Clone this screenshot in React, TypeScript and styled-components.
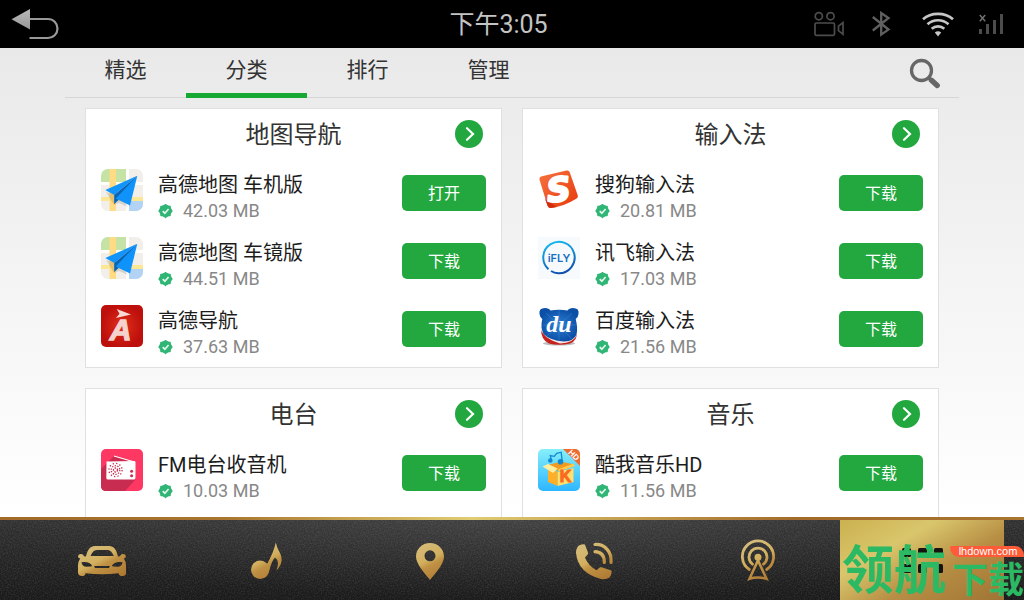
import { ReactNode, useState } from "react";
import styled, { createGlobalStyle } from "styled-components";

const GlobalStyle = createGlobalStyle`
  * {
    box-sizing: border-box;
  }
  body {
    margin: 0;
    font-family: Roboto, "Noto Sans CJK SC", sans-serif;
    overflow: hidden;
  }
  button {
    font-family: inherit;
    border: 0;
    padding: 0;
    background: none;
    cursor: pointer;
  }
  svg {
    display: block;
  }
`;

const Screen = styled.div`
  position: relative;
  height: 100vh;
  display: flex;
  flex-direction: column;
  overflow: hidden;
`;

const StatusBar = styled.header`
  flex: none;
  height: 48px;
  display: grid;
  grid-template-columns: 1fr auto 1fr;
  align-items: center;
  padding: 0 21px 0 10px;
  background-color: #000;
`;

const BackButton = styled.button`
  justify-self: start;
`;

const Clock = styled.time`
  margin-right: 16px;
  padding-top: 2px;
  color: #c4c4c4;
  font-size: 25px;
  line-height: 46px;
`;

const StatusIcons = styled.div`
  justify-self: end;
  display: flex;
  gap: 24px;
`;

const Store = styled.main`
  flex: 1;
  min-height: 0;
  padding: 0 65px;
  overflow: hidden;
  background: linear-gradient(#e9e9e9, #ffffff);
`;

const Nav = styled.nav`
  height: 50px;
  display: flex;
  align-items: stretch;
  box-shadow: inset 0 -1px 0 #d6d6d6;
`;

const Tab = styled.button<{ $active: boolean }>`
  width: 121px;
  padding-bottom: 2px;
  color: #333;
  font-size: 21px;
  line-height: 32px;
  border-bottom: 5px solid ${(props) => (props.$active ? "#16a832" : "transparent")};
`;

const SearchButton = styled.button`
  margin-left: auto;
  margin-right: 16px;
`;

const Cards = styled.div`
  display: grid;
  grid-template-columns: 1fr 1fr;
  gap: 20px;
  padding: 10px 20px;
`;

const Card = styled.section`
  min-height: 260px;
  padding-bottom: 4px;
  background-color: #fff;
  border: 1px solid #e0e0e0;
`;

const CardHeader = styled.div`
  height: 50px;
  display: grid;
  grid-template-columns: 28px 1fr 28px;
  align-items: center;
  padding: 0 18px;
`;

const CardTitle = styled.h2`
  grid-column: 2;
  margin: 0;
  padding-top: 2px;
  text-align: center;
  color: #333;
  font-size: 24px;
  font-weight: 400;
  line-height: 36px;
`;

const MoreButton = styled.button`
  width: 28px;
  height: 28px;
  border-radius: 50%;
  background-color: #22a83f;
`;

const AppList = styled.ul`
  margin: 0;
  padding: 0;
  list-style: none;
`;

const AppRow = styled.li`
  display: flex;
  align-items: flex-start;
  gap: 15px;
  padding: 10px 15px 4px;
`;

const AppInfo = styled.div`
  flex: 1;
  min-width: 0;
`;

const AppName = styled.div`
  padding-top: 2px;
  color: #1c1c1c;
  font-size: 20px;
  line-height: 28px;
`;

const AppSize = styled.div`
  display: flex;
  align-items: center;
  gap: 10px;
  color: #888;
  font-size: 18px;
  line-height: 24px;
`;

const ActionButton = styled.button`
  width: 84px;
  height: 36px;
  margin-top: 6px;
  padding-top: 2px;
  border-radius: 5px;
  background-color: #22a83f;
  color: #fff;
  font-size: 16px;
  line-height: 24px;
`;

const Dock = styled.footer`
  flex: none;
  border-top: 3px solid;
  border-image: linear-gradient(90deg, #a36a2a 0%, #a9752f 22%, #e0cc72 46%, #a36a2a 78%, #a9752f) 1;
`;

const DockItems = styled.div`
  height: 80px;
  display: flex;
  padding: 0 20px;
  background: url("data:image/svg+xml,%3Csvg xmlns='http://www.w3.org/2000/svg' width='160' height='80'%3E%3Cfilter id='n'%3E%3CfeTurbulence type='fractalNoise' baseFrequency='.7' numOctaves='2'/%3E%3CfeColorMatrix values='0 0 0 0 1 0 0 0 0 1 0 0 0 0 1 .2 0 0 0 -.07'/%3E%3C/filter%3E%3Crect width='160' height='80' filter='url(%23n)'/%3E%3C/svg%3E"),
    radial-gradient(ellipse 50% 100% at 50% 0, rgba(255, 255, 255, 0.08), transparent),
    linear-gradient(#303030, #181818);
`;

const DockButton = styled.button<{ $active: boolean }>`
  flex: 1;
  display: flex;
  align-items: center;
  justify-content: center;
  background: ${(props) =>
    props.$active
      ? "linear-gradient(150deg, #cbb14f 0%, #d9c66c 32%, #b78e44 62%, #9f7434 100%)"
      : "none"};
`;

const Watermark = styled.div`
  position: absolute;
  right: 0;
  bottom: 0;
  display: flex;
  align-items: flex-end;
  color: #2bb963;
  font-family: "Noto Sans CJK SC", sans-serif;
  font-weight: 700;
  white-space: nowrap;
  pointer-events: none;
`;

const WatermarkLarge = styled.span`
  font-size: 52px;
  line-height: 66px;
`;

const WatermarkSide = styled.div`
  display: flex;
  flex-direction: column;
  align-items: flex-end;
  padding: 0 0 3px 4px;
  font-size: 36px;
  line-height: 40px;
`;

const WatermarkSite = styled.span`
  width: 74px;
  padding-left: 2px;
  border-radius: 2px 10px 0 10px;
  background-color: #ff5b38;
  color: #fff;
  font: 11px/11px "Liberation Sans", sans-serif;
  text-align: center;
`;

function BackIcon() {
  return (
    <svg width="50" height="34" viewBox="0 0 50 34">
      <defs>
        <linearGradient id="back" x1="0" y1="0" x2="0" y2="1">
          <stop offset="0" stopColor="#b8b8b8" />
          <stop offset="1" stopColor="#999" />
        </linearGradient>
      </defs>
      <path d="M1.5 12.3 20 2v20.5z" fill="url(#back)" />
      <path d="M20 12h18a9.5 9.5 0 0 1 0 19H19.5" fill="none" stroke="#999" strokeWidth="2.2" />
    </svg>
  );
}

function CameraIcon() {
  return (
    <svg width="32" height="26" fill="none" stroke="#4c4c4c" strokeWidth="1.7">
      <circle cx="5.8" cy="5.2" r="3.6" />
      <circle cx="17.5" cy="5.2" r="3.6" />
      <rect x="2" y="12" width="19.5" height="12.3" rx="1.2" />
      <path d="M30 11.5v11.8l-4.5-3.6v-4.6z" />
    </svg>
  );
}

function BluetoothIcon() {
  return (
    <svg width="26" height="26" fill="none" stroke="#606060" strokeWidth="2.3">
      <path d="M3.8 6 19.5 18.5 12.2 23.6V2l7.3 5L3.8 19.5" />
    </svg>
  );
}

function WifiIcon() {
  return (
    <svg width="36" height="26" fill="none" stroke="#c6c6c6" strokeWidth="2.7">
      <path d="M4 8.2C12 1 26 1 34 8.2" />
      <path d="M8.5 13.2c6-5.3 15-5.3 21 0" />
      <path d="M12.7 17.8c3.6-3.2 9-3.2 12.6 0" />
      <path d="M15.8 21.6c1.9-1.700 4.500-1.700 6.400 0L19 25.400z" fill="#c6c6c6" stroke="none" />
    </svg>
  );
}

function SignalIcon() {
  return (
    <svg width="24" height="26" fill="#4c4c4c">
      <path d="M0 18h3v5H0zM7 13h3v10H7zM14 9h3v14h-3zM21 3h3v20h-3z" />
      <path d="m.8 4 5.4 6.2M6.2 4 .8 10.2" stroke="#707070" strokeWidth="1.5" />
    </svg>
  );
}

function SearchIcon() {
  return (
    <svg width="36" height="36" fill="none" stroke="#666">
      <circle cx="14.5" cy="15.5" r="10" strokeWidth="3.3" />
      <path d="m22 23 2.5 2.5" strokeWidth="3.5" />
      <path d="m24.5 25.3 5.700 5.200" strokeWidth="5.4" strokeLinecap="round" />
    </svg>
  );
}

function ArrowIcon() {
  return (
    <svg width="28" height="28" fill="none" stroke="#fff" strokeWidth="2.2" strokeLinecap="round">
      <path d="m12 8.200 6 5.800-6 5.800" />
    </svg>
  );
}

function VerifiedIcon() {
  return (
    <svg width="15" height="15" viewBox="0.500 1 14 14">
      <g fill="#2fb574">
        <circle cx="7.500" cy="7.500" r="5.800" />
        <rect x="2.600" y="2.600" width="9.800" height="9.800" rx=".6" />
        <rect x="2.600" y="2.600" width="9.800" height="9.800" rx=".6" transform="rotate(45 7.500 7.500)" />
      </g>
      <path d="m4.900 7.600 2 2 3.500-3.900" fill="none" stroke="#e4f7ed" strokeWidth="1.600" />
    </svg>
  );
}

function AmapLogo() {
  return (
    <svg width="42" height="42">
      <clipPath id="tile">
        <rect width="42" height="42" rx="7" />
      </clipPath>
      <g clipPath="url(#tile)">
        <path d="M0 0h42v42H0z" fill="#f2efea" />
        <path d="M0 0h25v13H0z" fill="#c4e3a4" />
        <path d="M28 32h14v10H28z" fill="#b2d3f3" />
        <path d="M25 0h3v42h-3zM0 13h42v3H0z" fill="#fff" />
        <path d="M0 28h42v4H0z" fill="#fce794" />
        <path d="M8.500 0h6.500v42H8.500z" fill="#ffdb83" />
        <path d="m5 23 8 13 5-2 9 4-8-11z" fill="#000" opacity=".12" />
        <path d="M36.300 6.700 4.300 21l8.900 5z" fill="#1295fb" />
        <path d="M36.300 6.700 13.200 26v9l3.800-3.500z" fill="#0965b4" />
        <path d="M36.300 6.700 14.800 29.500l14.200 7z" fill="#0f93fb" />
      </g>
    </svg>
  );
}

function AmapNaviLogo() {
  return (
    <svg width="42" height="42">
      <radialGradient id="red">
        <stop offset="0" stopColor="#e0301c" />
        <stop offset="1" stopColor="#bd0f0b" />
      </radialGradient>
      <rect width="42" height="42" rx="5" fill="url(#red)" />
      <path d="m15.700 4 14.300 5.500-15 3.500 3.500-4.200z" fill="#f8d9d4" />
      <text
        x="19.500"
        y="35"
        textAnchor="middle"
        fill="#f6d2cd"
        stroke="#f6d2cd"
        strokeWidth="1.300"
        fontFamily="Liberation Sans"
        fontSize="30"
        fontWeight="700"
        fontStyle="italic"
      >
        A
      </text>
    </svg>
  );
}

function SogouLogo() {
  return (
    <svg width="42" height="42">
      <linearGradient id="orange" x1="0" y1="0" x2="1" y2="1">
        <stop offset="0" stopColor="#f6733e" />
        <stop offset="1" stopColor="#e8380d" />
      </linearGradient>
      <path
        d="M4 7.300 28.500 1.600q2.500-.5 3.300 1.900l8 23q.6 2.200-1.600 3.300Q26 37.500 13 39q-2.600.2-3.400-2.300L1.600 11q-.8-3 2.400-3.700z"
        fill="url(#orange)"
      />
      <path d="m7 30 12 8-6 1q-2.600.2-3.400-2.300z" fill="#d12f0c" />
      <text
        x="20.500"
        y="32"
        textAnchor="middle"
        transform="rotate(-6 20.500 20.500)"
        fill="#fff"
        stroke="#fff"
        strokeWidth="2.400"
        strokeLinejoin="round"
        fontFamily="DejaVu Sans"
        fontSize="33"
        fontWeight="700"
        fontStyle="italic"
      >
        S
      </text>
    </svg>
  );
}

function IflyLogo() {
  return (
    <svg width="42" height="42">
      <linearGradient id="ifly" x1=".3" y1="0" x2=".6" y2="1">
        <stop offset="0" stopColor="#14b8ee" />
        <stop offset="1" stopColor="#0f4fae" />
      </linearGradient>
      <path d="M0 0h42v42H0z" fill="#f6fafd" />
      <path
        d="M10.500 32.200A15.700 15.700 0 1 1 20.800 36.200Q16.500 36.400 13 34"
        fill="none"
        stroke="url(#ifly)"
        strokeWidth="2"
      />
      <text
        x="21"
        y="24.500"
        textAnchor="middle"
        fill="#1670c4"
        fontFamily="Inter"
        fontSize="11"
        fontWeight="600"
      >
        iFLY
      </text>
    </svg>
  );
}

function BaiduLogo() {
  return (
    <svg width="42" height="42">
      <radialGradient id="bear">
        <stop offset="0" stopColor="#2a7fd3" />
        <stop offset="1" stopColor="#0b4fa6" />
      </radialGradient>
      <ellipse cx="21" cy="38.500" rx="16" ry="2" fill="#bbb" />
      <path d="M3 24q0 11 8 14.500 10 2.500 21 0 8-3 7-14z" fill="#c6211c" />
      <path d="M2 22q2 11 20 16.500 14-.5 17-9l.5-9z" fill="#efe5e5" />
      <path
        d="M1.500 9Q.5 3 7 3q4 0 5.500 2.500 8.500-1.500 17 0Q31 3 35 3q6.500 0 5.500 6-.3 3-2.800 5 2.300 9 .8 15.500-2.500 6.500-12.500 7Q12 35.500 5.500 29q-3.300-7-1.200-15Q1.800 12 1.500 9z"
        fill="url(#bear)"
      />
      <path d="m8 8 26 26M34 8 8 32M21 5v31M5 20h33" stroke="#5ba1e4" strokeWidth=".5" opacity=".6" />
      <text
        x="21"
        y="27"
        textAnchor="middle"
        fill="#fff"
        fontFamily="Liberation Serif"
        fontSize="24"
        fontWeight="700"
        fontStyle="italic"
      >
        du
      </text>
    </svg>
  );
}

function RadioLogo() {
  return (
    <svg width="42" height="42">
      <rect width="42" height="42" rx="5" fill="#ff3763" />
      <path d="M13 7 0 20v17q0 5 5 5h19l11-12L33 14z" fill="#c82c50" />
      <path d="m13 7 20.500 6" stroke="#fff" strokeWidth="1.200" />
      <path d="m5.500 12.500 28-.5q1 0 1 1.500V29q0 1.500-1.500 1.500H7q-1.700 0-1.700-1.500z" fill="#fff" />
      <circle cx="14.500" cy="21" r="2" fill="none" stroke="#c82c50" strokeWidth="1.300" strokeDasharray="1.500 1" />
      <circle cx="14.500" cy="21" r="4.300" fill="none" stroke="#c82c50" strokeWidth="1.300" strokeDasharray="1.300 1.400" />
      <circle cx="14.500" cy="21" r="6.600" fill="none" stroke="#c82c50" strokeWidth="1.300" strokeDasharray="1.300 2.200" />
      <circle cx="30.600" cy="22.300" r="1.500" fill="#c82c50" />
      <circle cx="30.600" cy="26.800" r="1.500" fill="#c82c50" />
    </svg>
  );
}

function KuwoLogo() {
  return (
    <svg width="42" height="42">
      <linearGradient id="sky" x1="0" y1="0" x2="0" y2="1">
        <stop offset="0" stopColor="#86effa" />
        <stop offset="1" stopColor="#2db6ff" />
      </linearGradient>
      <clipPath id="kuwo">
        <rect width="42" height="42" rx="5" />
      </clipPath>
      <g clipPath="url(#kuwo)">
        <path d="M0 0h42v42H0z" fill="url(#sky)" />
        <path d="m10 16 13-3.500L36 15.500 20 22z" fill="#f19a1f" />
        <g fill="#1289d0">
          <circle cx="12.300" cy="11.500" r="2.300" />
          <circle cx="22.500" cy="12.700" r="2.800" />
          <path d="m13.300 11-1-4.500 4 .8 2.400-3 4.500-1.100 1 9.500" fill="none" stroke="#1289d0" strokeWidth="1.300" />
        </g>
        <path d="m10 17 9.700 6v14L10 33z" fill="#ffae27" />
        <path d="m19.700 23 15.800-4v14l-15.800 4z" fill="#ffe06c" />
        <path d="M4.500 17.500 10 15l9.700 4.500L15 24z" fill="#ffee9e" />
        <path d="M19.700 20.500 35.500 14.500l1.500 2.500L21 22.500z" fill="#ffca4a" />
        <text
          x="27.500"
          y="33"
          textAnchor="middle"
          fill="#fa6a1e"
          stroke="#fa6a1e"
          fontFamily="Liberation Sans"
          fontSize="16"
          fontWeight="700"
        >
          K
        </text>
        <path d="M25 0h17v17z" fill="#ef6a30" />
        <text
          x="36"
          y="9"
          textAnchor="middle"
          transform="rotate(45 36 6)"
          fill="#fff"
          fontFamily="Liberation Sans"
          fontSize="8"
          fontWeight="700"
        >
          HD
        </text>
      </g>
    </svg>
  );
}

function DockIcon({ children }: { children: ReactNode }) {
  return (
    <svg width="48" height="44" fill="url(#gold)" stroke="none">
      <defs>
        <linearGradient id="gold" gradientUnits="userSpaceOnUse" x1="14" y1="4" x2="34" y2="42">
          <stop offset="0" stopColor="#d5bd7e" />
          <stop offset=".45" stopColor="#d2b05f" />
          <stop offset=".6" stopColor="#bf9144" />
          <stop offset="1" stopColor="#ae7a33" />
        </linearGradient>
      </defs>
      {children}
    </svg>
  );
}

const dockItems = [
  {
    label: "车辆",
    icon: (
      <path
        fillRule="evenodd"
        d="M8 18.500C9.500 12 12 8 17 8h14c5 0 7.500 4 9 10.500l2-.3q.5-2.200 3-2.200 3 .2 2.800 2.800-.4 1.600-2 1.600 2.200 3 2.200 7V35q0 3-3.500 3t-4-2.800q-16.500 2-33 0Q7.300 38 4 38T0 35v-7.600q0-4 2.200-7-1.900 0-2.200-1.600Q0 16.200 3 16q2.500 0 3 2.200zM12.500 18h23.300q-2.500-6-6-6H18.500q-3.500 0-6 6zM3.400 24.200q1 4.500 5 4.500 5.200 0 5.800-.9-2.800-5-10.800-3.600zm41.200 0q-1 4.500-5 4.500-5.200 0-5.800-.9 2.800-5 10.800-3.600zM16 28l1.200 2h13.600l1.200-2z"
      />
    ),
  },
  {
    label: "音乐",
    icon: (
      <>
        <circle cx="18.200" cy="31.800" r="9.200" />
        <path d="M24.500 27Q31.500 15 33.800 4.500q1.200 5.500 4.200 10.500c3 6 1.800 12-3.600 17.500Q38 23 33 19.500q-3.200 3-5.700 13z" />
      </>
    ),
  },
  {
    label: "导航",
    icon: (
      <path
        fillRule="evenodd"
        d="M24 5c8 0 14 6 14 13.500C38 26 29.500 35 24 42 18.500 35 10 26 10 18.500 10 11 16 5 24 5zm0 7.300a5.500 5.500 0 1 0 0 11 5.500 5.500 0 0 0 0-11z"
      />
    ),
  },
  {
    label: "电话",
    icon: (
      <>
        <path d="M7.500 9Q9.500 6 14 6.200q1 0 1.300 1.200l2.800 7.400q.3 1-.5 1.700L15 19.500q3 8 11.500 12.700l3.200-2.600q.8-.6 1.800-.3l9.300 3q1 .4.900 1.500-.2 4-2.200 5.700Q36 42 31 41 8 35 6 15q-.1-3.500 1.500-6z" />
        <g fill="none" stroke="url(#gold)" strokeWidth="3.200" strokeLinecap="round">
          <path d="M25 6.500C35 6 42 14 41 24.500" />
          <path d="M25 13.700q9.500.3 9.300 10.800" />
        </g>
      </>
    ),
  },
  {
    label: "收音机",
    icon: (
      <>
        <g fill="none" stroke="url(#gold)" strokeWidth="2.800">
          <path d="M15.300 31.500a15.600 15.600 0 1 1 17.400 0" strokeLinecap="round" />
          <path d="M18.500 26.200a9 9 0 1 1 11 0" strokeLinecap="round" />
          <path d="M24 22.500 15.500 40.800q8.500-2.600 17 0z" strokeWidth="2.600" />
        </g>
        <circle cx="24" cy="19.300" r="3.500" />
      </>
    ),
  },
  {
    label: "应用",
    icon: (
      <g fill="#17140f">
        {[4, 20, 36].map((x) =>
          [10, 26].map((y) => <rect key={`${x}-${y}`} x={x} y={y} width="9" height="9" rx="1.500" />)
        )}
      </g>
    ),
  },
];

interface IApp {
  name: string;
  size: string;
  logo: ReactNode;
  action?: string;
}

interface ICategory {
  title: string;
  apps: IApp[];
}

const categories: ICategory[] = [
  {
    title: "地图导航",
    apps: [
      { name: "高德地图 车机版", size: "42.03 MB", logo: <AmapLogo />, action: "打开" },
      { name: "高德地图 车镜版", size: "44.51 MB", logo: <AmapLogo /> },
      { name: "高德导航", size: "37.63 MB", logo: <AmapNaviLogo /> },
    ],
  },
  {
    title: "输入法",
    apps: [
      { name: "搜狗输入法", size: "20.81 MB", logo: <SogouLogo /> },
      { name: "讯飞输入法", size: "17.03 MB", logo: <IflyLogo /> },
      { name: "百度输入法", size: "21.56 MB", logo: <BaiduLogo /> },
    ],
  },
  {
    title: "电台",
    apps: [{ name: "FM电台收音机", size: "10.03 MB", logo: <RadioLogo /> }],
  },
  {
    title: "音乐",
    apps: [{ name: "酷我音乐HD", size: "11.56 MB", logo: <KuwoLogo /> }],
  },
];

function CategoryCard({ title, apps }: ICategory) {
  return (
    <Card>
      <CardHeader>
        <CardTitle>{title}</CardTitle>
        <MoreButton aria-label={title}>
          <ArrowIcon />
        </MoreButton>
      </CardHeader>
      <AppList>
        {apps.map((app) => (
          <AppRow key={app.name}>
            {app.logo}
            <AppInfo>
              <AppName>{app.name}</AppName>
              <AppSize>
                <VerifiedIcon />
                {app.size}
              </AppSize>
            </AppInfo>
            <ActionButton>{app.action ?? "下载"}</ActionButton>
          </AppRow>
        ))}
      </AppList>
    </Card>
  );
}

const tabs = ["精选", "分类", "排行", "管理"];

function App() {
  const [tab, setTab] = useState("分类");
  const [dock, setDock] = useState("应用");
  return (
    <Screen lang="zh-CN">
      <GlobalStyle />
      <StatusBar>
        <BackButton aria-label="返回">
          <BackIcon />
        </BackButton>
        <Clock>下午3:05</Clock>
        <StatusIcons>
          <CameraIcon />
          <BluetoothIcon />
          <WifiIcon />
          <SignalIcon />
        </StatusIcons>
      </StatusBar>
      <Store>
        <Nav>
          {tabs.map((name) => (
            <Tab key={name} $active={name === tab} onClick={() => setTab(name)}>
              {name}
            </Tab>
          ))}
          <SearchButton aria-label="搜索">
            <SearchIcon />
          </SearchButton>
        </Nav>
        <Cards>
          {categories.map((category) => (
            <CategoryCard key={category.title} {...category} />
          ))}
        </Cards>
      </Store>
      <Dock>
        <DockItems>
          {dockItems.map((item) => (
            <DockButton
              key={item.label}
              aria-label={item.label}
              $active={item.label === dock}
              onClick={() => setDock(item.label)}
            >
              <DockIcon>{item.icon}</DockIcon>
            </DockButton>
          ))}
        </DockItems>
      </Dock>
      <Watermark>
        <WatermarkLarge>领航</WatermarkLarge>
        <WatermarkSide>
          <WatermarkSite>lhdown.com</WatermarkSite>
          下载
        </WatermarkSide>
      </Watermark>
    </Screen>
  );
}

export default App;
